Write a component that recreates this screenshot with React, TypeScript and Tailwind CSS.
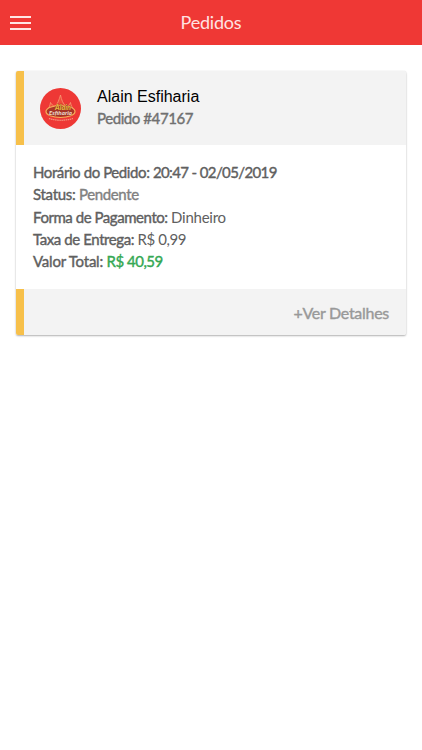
import type { ReactNode } from 'react';

const strong = '[-webkit-text-stroke:0.4px_currentColor]';

function Logo() {
  return (
    <svg viewBox="0 0 41 41" className="h-[41px] w-[41px] shrink-0">
      <circle cx="20.5" cy="20.5" r="20.5" fill="#ee3835" />
      <path
        d="M7 22C9 20 10 18 10.500 14.500C12 17 14 19 15.500 18C18 15 19 12 20.500 7C21.500 12 23 16 26 18C28 18.500 29.500 17 30.500 14.500C31 18 32.500 20 34.500 22Z"
        fill="#ef4c38"
        stroke="#f79a74"
        strokeWidth="0.8"
      />
      <ellipse cx="20.500" cy="23.500" rx="14.500" ry="6" fill="#ad3427" stroke="#f8b05a" strokeWidth="1.200" />
      <g fontFamily="Lato, sans-serif" fontStyle="italic" fontWeight="900" textAnchor="middle" paintOrder="stroke" stroke="#8a3020" strokeWidth="0.6">
        <text x="23" y="21.500" fontSize="6.500" fill="#e8b840" textLength="16" lengthAdjust="spacingAndGlyphs">Alain</text>
        <text x="20.500" y="27" fontSize="5.500" fill="#f2d4c8" textLength="23" lengthAdjust="spacingAndGlyphs">Esfiharia</text>
      </g>
      <path d="M9 30.500Q20.500 34 33 30.500" fill="none" stroke="#f4a28a" strokeWidth="1.100" strokeDasharray="1.500 0.600" />
    </svg>
  );
}

function Row({ label, spacing = 'tracking-[-0.41px]', children }: { label: string; spacing?: string; children: ReactNode }) {
  return (
    <p className={`whitespace-nowrap ${spacing}`}>
      <span className={strong}>{label}</span> {children}
    </p>
  );
}

export default function App() {
  return (
    <div className="min-h-[750px] w-full bg-white font-['Lato',sans-serif] text-[#606060]">
      <header className="grid h-[45px] grid-cols-[1fr_auto_1fr] items-center bg-[#ef3835] px-[10px] text-[#ffe3e1]">
        <button aria-label="Menu" className="flex w-[21px] flex-col gap-1">
          <span className="h-[2px] w-full bg-[#ffe6e4]" />
          <span className="h-[2px] w-full bg-[#ffe6e4]" />
          <span className="h-[2px] w-full bg-[#ffe6e4]" />
        </button>
        <h1 className="-mt-[2px] text-[18px] leading-[22px] tracking-[-0.2px]">Pedidos</h1>
      </header>

      <main className="pt-[26px] pr-4 pl-4">
        <article className="overflow-hidden rounded-[2px] bg-white shadow-[0_1px_2px_rgba(0,0,0,0.3),0_0_1px_rgba(0,0,0,0.15)]">
          <div className="flex h-[74px] items-center border-l-8 border-[#f7c04a] bg-[#f3f3f3] pl-4">
            <Logo />
            <div className="-mt-[3px] pl-4">
              <h2 className="pt-px font-['Liberation_Sans',sans-serif] text-[16px] leading-[22px] text-black">Alain Esfiharia</h2>
              <p className={`text-[15px] leading-[21px] tracking-[-0.42px] text-[#707070] ${strong}`}>Pedido #47167</p>
            </div>
          </div>
          <div className="h-[144px] pt-[15.800px] pl-[17px] text-[15px] leading-[22.400px]">
            <Row label="Horário do Pedido:"><span className={`tracking-[-0.62px] ${strong}`}>20:47 - 02/05/2019</span></Row>
            <Row label="Status:" spacing="tracking-[-0.3px]"><span className={`tracking-[-0.38px] text-[#818181] ${strong}`}>Pendente</span></Row>
            <Row label="Forma de Pagamento:" spacing="tracking-[-0.45px]"><span className="tracking-[-0.25px]">Dinheiro</span></Row>
            <Row label="Taxa de Entrega:">R$ 0,99</Row>
            <Row label="Valor Total:" spacing="tracking-[-0.22px]"><span className={`tracking-[-0.5px] text-[#34a853] ${strong}`}>R$ 40,59</span></Row>
          </div>
          <div className="flex h-[46px] items-center justify-end border-l-8 border-[#f7c04a] bg-[#f3f3f3] pr-[17px]">
            <button className={`pt-[2px] text-[16px] leading-[22px] tracking-[-0.28px] text-[#999] ${strong}`}>+Ver Detalhes</button>
          </div>
        </article>
      </main>
    </div>
  );
}
